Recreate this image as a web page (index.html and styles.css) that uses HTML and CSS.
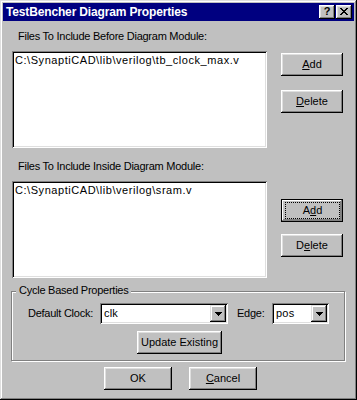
FILE: index.html
```html
<!DOCTYPE html>
<html>
<head>
<meta charset="utf-8">
<link rel="stylesheet" href="styles.css">
</head>
<body>
<div class="window">
  <div class="titlebar">
    <span class="title">TestBencher Diagram Properties</span>
    <div class="tbtns">
      <span class="tbtn help">?</span>
      <span class="tbtn close"><svg width="8" height="7" viewBox="0 0 8 7" shape-rendering="crispEdges"><path d="M0 0h2v1H0zM6 0h2v1H6zM1 1h2v1H1zM5 1h2v1H5zM2 2h4v1H2zM3 3h2v1H3zM2 4h4v1H2zM1 5h2v1H1zM5 5h2v1H5zM0 6h2v1H0zM6 6h2v1H6z" fill="#000"/></svg></span>
    </div>
  </div>
  <div class="content">
    <div class="sec s1">
      <div class="col">
        <div class="label">Files To Include Before Diagram Module:</div>
        <div class="listbox">C:\SynaptiCAD\lib\verilog\tb_clock_max.v</div>
      </div>
      <div class="btncol">
        <button class="btn"><span class="cap"><u>A</u>dd</span></button>
        <button class="btn"><span class="cap"><u>D</u>elete</span></button>
      </div>
    </div>
    <div class="sec s2">
      <div class="col">
        <div class="label">Files To Include Inside Diagram Module:</div>
        <div class="listbox">C:\SynaptiCAD\lib\verilog\sram.v</div>
      </div>
      <div class="btncol">
        <button class="btn default"><span class="cap focus">A<u>d</u>d</span></button>
        <button class="btn"><span class="cap">D<u>e</u>lete</span></button>
      </div>
    </div>
    <div class="group">
      <span class="legend">Cycle Based Properties</span>
      <div class="row1">
        <span class="lbl-clock">Default Clock:</span>
        <div class="combo wide">
          <span class="val">clk</span>
          <span class="drop"><svg width="7" height="4" viewBox="0 0 7 4" shape-rendering="crispEdges"><path d="M0 0h7v1H0zM1 1h5v1H1zM2 2h3v1H2zM3 3h1v1H3z" fill="#000"/></svg></span>
        </div>
        <span class="lbl-edge">Edge:</span>
        <div class="combo small">
          <span class="val">pos</span>
          <span class="drop"><svg width="7" height="4" viewBox="0 0 7 4" shape-rendering="crispEdges"><path d="M0 0h7v1H0zM1 1h5v1H1zM2 2h3v1H2zM3 3h1v1H3z" fill="#000"/></svg></span>
        </div>
      </div>
      <div class="row2">
        <button class="btn update"><span class="cap">Update Existing</span></button>
      </div>
    </div>
    <div class="okrow">
      <button class="btn ok"><span class="cap">OK</span></button>
      <button class="btn ok"><span class="cap"><u>C</u>ancel</span></button>
    </div>
  </div>
</div>
</body>
</html>
```
FILE: styles.css
```css
html, body {
  margin: 0;
  padding: 0;
  background: #c0c0c0;
}
body {
  font-family: "Liberation Sans", Arial, sans-serif;
  font-size: 11px;
  line-height: 13px;
  letter-spacing: -0.25px;
  color: #000;
}
.window {
  width: 357px;
  height: 400px;
  box-sizing: border-box;
  padding: 3px;
  background: #c0c0c0;
  box-shadow: inset -1px -1px 0 #000, inset 1px 1px 0 #dfdfdf, inset -2px -2px 0 #808080, inset 2px 2px 0 #fff;
}
.titlebar {
  height: 18px;
  background: #000080;
  display: flex;
  align-items: center;
  padding-left: 3px;
}
.title {
  flex: 1;
  color: #fff;
  font-weight: bold;
  font-size: 12px;
  letter-spacing: -0.15px;
}
.tbtns {
  display: flex;
  gap: 1px;
  margin-right: 2px;
}
.tbtn {
  width: 16px;
  height: 14px;
  box-sizing: border-box;
  background: #c0c0c0;
  box-shadow: inset -1px -1px 0 #000, inset 1px 1px 0 #fff, inset -2px -2px 0 #808080, inset 2px 2px 0 #dfdfdf;
  display: flex;
  align-items: center;
  justify-content: center;
}
.help {
  font-weight: bold;
  font-size: 11px;
  letter-spacing: 0;
  padding-bottom: 1px;
}
.close svg {
  margin-bottom: 1px;
}
.content {
  padding-left: 8px;
}
.sec {
  display: flex;
  margin-left: 1px;
}
.s1 {
  margin-top: 9px;
}
.s2 {
  margin-top: 12px;
}
.col {
  width: 255px;
}
.label {
  margin-left: 6px;
  height: 13px;
  white-space: nowrap;
}
.listbox {
  margin-top: 8px;
  width: 255px;
  height: 97px;
  box-sizing: border-box;
  background: #fff;
  padding: 3px 3px;
  white-space: nowrap;
  letter-spacing: 0.55px;
  box-shadow: inset 1px 1px 0 #808080, inset -1px -1px 0 #fff, inset 2px 2px 0 #000, inset -2px -2px 0 #dfdfdf;
}
.btncol {
  margin-left: 14px;
  display: flex;
  flex-direction: column;
}
.s1 .btncol {
  padding-top: 23px;
  gap: 14px;
}
.s2 .btncol {
  padding-top: 39px;
  gap: 12px;
}
.btn {
  font: inherit;
  letter-spacing: 0;
  color: #000;
  border: 0;
  margin: 0;
  padding: 0;
  width: 62px;
  height: 23px;
  box-sizing: border-box;
  background: #c0c0c0;
  box-shadow: inset -1px -1px 0 #000, inset 1px 1px 0 #fff, inset -2px -2px 0 #808080, inset 2px 2px 0 #dfdfdf;
  display: flex;
  align-items: center;
  justify-content: center;
}
.btn .cap {
  white-space: nowrap;
}
.btn.default {
  border: 1px solid #000;
  box-shadow: inset -1px -1px 0 #808080, inset 1px 1px 0 #fff, inset -2px -2px 0 #808080;
  padding: 2px 2px 2px 3px;
  align-items: stretch;
}
.cap.focus {
  flex: 1;
  border: 1px dotted #000;
  display: flex;
  align-items: center;
  justify-content: center;
}
u {
  text-decoration-thickness: 1px;
  text-underline-offset: 1px;
}
.group {
  position: relative;
  margin-top: 13px;
  width: 334px;
  height: 70px;
  box-sizing: border-box;
  border: 1px solid #808080;
  box-shadow: 1px 1px 0 #fff, inset 1px 1px 0 #fff;
  padding: 11px 0 0 16px;
}
.legend {
  position: absolute;
  left: 4px;
  top: -8px;
  padding: 0 3px;
  background: #c0c0c0;
  white-space: nowrap;
}
.row1 {
  display: flex;
  align-items: center;
  height: 21px;
}
.lbl-clock {
  width: 72px;
  white-space: nowrap;
}
.combo {
  height: 21px;
  box-sizing: border-box;
  padding: 2px;
  background: #fff;
  display: flex;
  box-shadow: inset 1px 1px 0 #808080, inset -1px -1px 0 #fff, inset 2px 2px 0 #000, inset -2px -2px 0 #dfdfdf;
}
.combo.wide {
  width: 128px;
}
.combo.small {
  width: 57px;
}
.combo .val {
  flex: 1;
  padding-left: 2px;
  line-height: 17px;
  letter-spacing: 0.2px;
}
.drop {
  width: 16px;
  height: 17px;
  box-sizing: border-box;
  background: #c0c0c0;
  box-shadow: inset -1px -1px 0 #000, inset 1px 1px 0 #dfdfdf, inset -2px -2px 0 #808080, inset 2px 2px 0 #fff;
  display: flex;
  align-items: center;
  justify-content: center;
}
.lbl-edge {
  margin-left: 9px;
  width: 35px;
}
.row2 {
  margin-top: 7px;
  padding-left: 109px;
}
.btn.update {
  width: 85px;
}
.okrow {
  display: flex;
  gap: 17px;
  margin-top: 6px;
  padding-left: 93px;
}
.btn.ok {
  width: 68px;
}
```
